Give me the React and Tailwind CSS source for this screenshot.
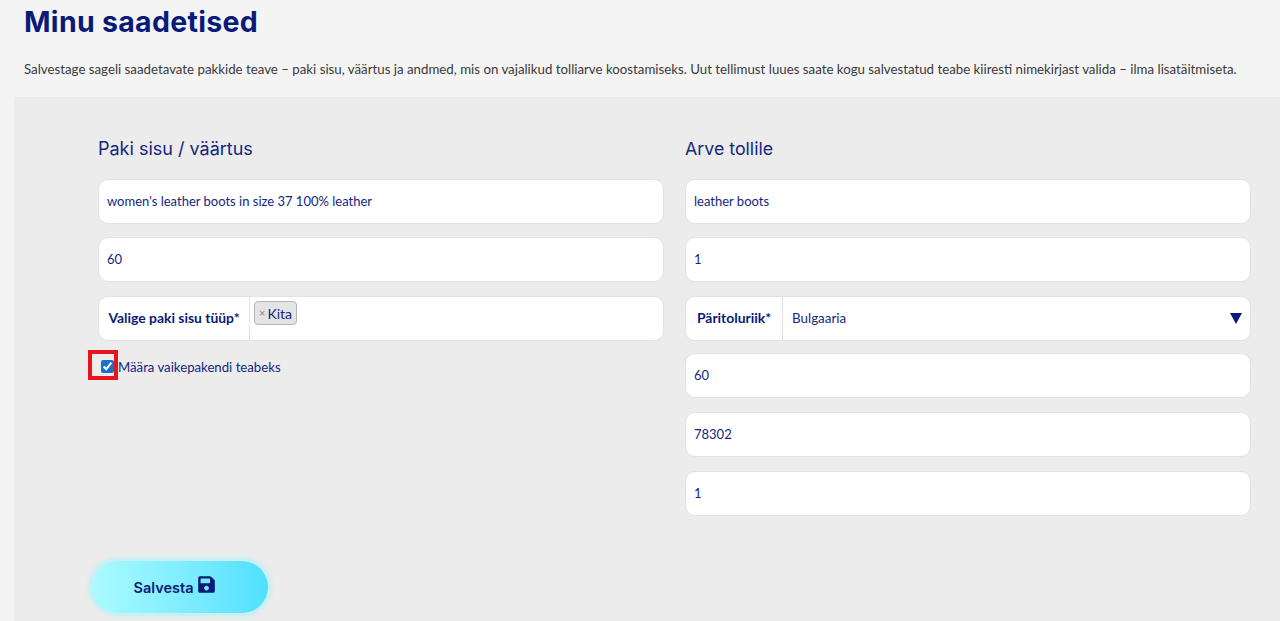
import { FaSave } from 'react-icons/fa'

const bodyFont = "font-['Lato','Noto_Sans',sans-serif]"
const displayFont = "font-['Inter','Lato',sans-serif]"

function Field({ value, className = '' }) {
  return (
    <div className={`flex h-[45px] items-center rounded-[10px] border border-[#e2e2e2] bg-white px-[8px] text-[13px] text-[#14267f] ${className}`}>
      {value}
    </div>
  )
}

function GroupField({ label, labelWidth, className = '', children }) {
  return (
    <div className={`flex h-[45px] items-stretch rounded-[10px] border border-[#e2e2e2] bg-white ${className}`}>
      <div
        className={`flex shrink-0 items-center justify-center border-r border-[#e2e2e2] text-[13.9px] font-bold text-[#0a1a78] ${labelWidth}`}
      >
        {label}
      </div>
      {children}
    </div>
  )
}

export default function App() {
  return (
    <div className={`h-[621px] overflow-hidden bg-[#f4f4f4] ${bodyFont}`}>
      <div className="h-[97px] px-6 pt-[5px]">
        <h1 className={`text-[28.5px] leading-[34px] font-bold tracking-[0.3px] text-[#0a1a78] ${displayFont}`}>Minu saadetised</h1>
        <p className="mt-[21px] text-[13.28px] leading-[18px] whitespace-nowrap text-[#3a3a3a]">
          Salvestage sageli saadetavate pakkide teave – paki sisu, väärtus ja andmed, mis on vajalikud tolliarve koostamiseks. Uut tellimust luues saate kogu salvestatud teabe kiiresti nimekirjast valida – ilma lisatäitmiseta.
        </p>
      </div>

      <div className="ml-[14px] h-[524px] bg-[#ececec] pt-[41px] pl-[84px]">
        <div className="grid w-[1153px] grid-cols-2 gap-x-[21px]">
          <div>
            <h2 className={`h-[41px] text-[18px] leading-[22px] text-[#14267f] ${displayFont}`}>Paki sisu / väärtus</h2>
            <Field value="women's leather boots in size 37 100% leather" />
            <Field value="60" className="mt-[13px]" />
            <GroupField label="Valige paki sisu tüüp*" labelWidth="w-[151px]" className="mt-[14px]">
              <div className="pt-[4px] pl-[4px]">
                <span className="flex h-[24px] items-center gap-[2px] rounded-[4px] border border-[#b5b5b5] bg-[#e4e4e4] pr-[4px] pl-[4px] text-[14px] text-[#14267f]">
                  <span className="text-[11px] font-bold text-[#999999]">×</span>
                  Kita
                </span>
              </div>
            </GroupField>
            <label className="relative mt-[17px] flex items-center gap-[4px] pl-[3px] text-[13.2px] leading-[18px] text-[#14267f]">
              <input type="checkbox" checked readOnly className="m-0 mb-[2px] h-[13px] w-[13px] accent-[#1a6fd0]" />
              Määra vaikepakendi teabeks
              <span className="absolute top-[-8px] left-[-10px] h-[30px] w-[30px] border-4 border-[#e8141c]" />
            </label>
          </div>

          <div>
            <h2 className={`h-[41px] text-[17.8px] leading-[22px] text-[#14267f] ${displayFont}`}>Arve tollile</h2>
            <Field value="leather boots" />
            <Field value="1" className="mt-[13px]" />
            <GroupField label="Päritoluriik*" labelWidth="w-[97px]" className="mt-[14px]">
              <div className="flex flex-1 items-center justify-between pr-[8px] pl-[9px] text-[13.4px] text-[#14267f]">
                Bulgaaria
                <svg width="12" height="11" viewBox="0 0 12 11">
                  <path d="M0 0H12L6 11Z" fill="#0a1a78" />
                </svg>
              </div>
            </GroupField>
            <Field value="60" className="mt-[12px]" />
            <Field value="78302" className="mt-[14px]" />
            <Field value="1" className="mt-[14px]" />
          </div>
        </div>

        <button className={`mt-[45px] ml-[-6px] flex h-[52px] w-[176px] items-center justify-center gap-[4px] rounded-full bg-gradient-to-r from-[#a9fbff] to-[#4ee0ff] pr-[10px] text-[14.5px] font-semibold text-[#0a1a78] shadow-[0_0_3px_4px_rgba(165,243,252,0.5)] ${displayFont}`}>
          <span className="mt-[2px]">Salvesta</span>
          <FaSave className="mb-[5px] h-[19px] w-[19px]" />
        </button>
      </div>
    </div>
  )
}
